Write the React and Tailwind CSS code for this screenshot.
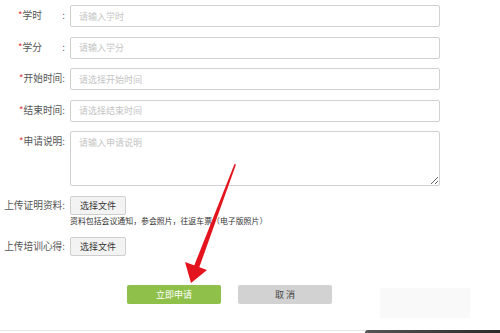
const font = { fontFamily: '"Noto Sans CJK SC", "Noto Sans", sans-serif' };

function Label({ children, spread }) {
    return (
        <div className="w-[63px] shrink-0 text-right text-[9.7px] text-[#555] leading-none">
            {spread ? (
                <span className="inline-flex w-[47px] justify-between">
                    <span><span className="text-[#e4393c]">*</span>{children}</span>
                    <span>:</span>
                </span>
            ) : (
                children
            )}
        </div>
    );
}

function Field({ label, placeholder, spread }) {
    return (
        <div className="flex h-[22px] items-center gap-[5px]">
            <Label spread={spread}>
                {spread ? label : <><span className="text-[#e4393c]">*</span>{label}:</>}
            </Label>
            <input
                className="h-[22px] w-[370px] rounded-[2px] border border-[#d0d0d0] px-[8px] text-[9px] outline-none placeholder:text-[#c4c4c4]"
                placeholder={placeholder}
                style={font}
            />
        </div>
    );
}

function FileButton() {
    return (
        <button className="h-[19px] w-[56px] rounded-[2px] border border-[#cfcfcf] bg-[#f3f3f3] text-[9px] text-[#333]">
            选择文件
        </button>
    );
}

export default function App() {
    return (
        <div className="relative h-[333px] w-[500px] overflow-hidden bg-white" style={font}>
            <div className="flex flex-col gap-[9.5px] pl-[2px] pt-[5px]">
                <Field label="学时" placeholder="请输入学时" spread />
                <Field label="学分" placeholder="请输入学分" spread />
                <Field label="开始时间" placeholder="请选择开始时间" />
                <Field label="结束时间" placeholder="请选择结束时间" />
                <div className="flex items-start gap-[5px]">
                    <div className="w-[63px] pt-[6px] text-right text-[9.7px] leading-none text-[#555]">
                        <span className="text-[#e4393c]">*</span>申请说明:
                    </div>
                    <textarea
                        className="h-[55px] w-[370px] rounded-[2px] border border-[#d0d0d0] px-[8px] py-[4px] text-[9px] outline-none placeholder:text-[#c4c4c4]"
                        placeholder="请输入申请说明"
                        style={font}
                    />
                </div>
            </div>

            <div className="mt-[10px] pl-[2px]">
                <div className="flex items-center gap-[5px]">
                    <div className="w-[63px] text-right text-[9.7px] leading-none text-[#555]">上传证明资料:</div>
                    <FileButton />
                </div>
                <div className="mt-[1px] pl-[68px] text-[7.9px] leading-[10px] text-[#333]">
                    资料包括会议通知，参会照片，往返车票（电子版照片）
                </div>
                <div className="mt-[11px] flex items-center gap-[5px]">
                    <div className="w-[63px] text-right text-[9.7px] leading-none text-[#555]">上传培训心得:</div>
                    <FileButton />
                </div>
            </div>

            <div className="mt-[29px] flex gap-[17px] pl-[127px]">
                <button className="h-[19px] w-[94px] rounded-[2px] bg-[#8fc04a] text-[9px] text-white">立即申请</button>
                <button className="h-[19px] w-[94px] rounded-[2px] bg-[#d2d2d2] text-[9px] text-[#444]">取 消</button>
            </div>

            {/* blurred watermark */}
            <div className="absolute left-[380px] top-[288px] h-[30px] w-[90px] bg-[#f9f9f9]" />

            {/* bottom edge */}
            <div className="absolute bottom-[2px] left-0 h-px w-full bg-[#e6e6e6]" />
            <div className="absolute bottom-0 left-[365px] h-[3px] w-[135px] rounded-tl-[12px] bg-gradient-to-r from-[#555] to-[#2a2a2a]" />

            {/* red arrow */}
            <svg className="pointer-events-none absolute left-0 top-0" width="500" height="333" viewBox="0 0 500 333">
                <polygon points="234.5,164 236,164.5 199,268 194,266" fill="#e3141d" />
                <polygon points="191,283 185,262 207,270" fill="#e3141d" />
            </svg>
        </div>
    );
}
